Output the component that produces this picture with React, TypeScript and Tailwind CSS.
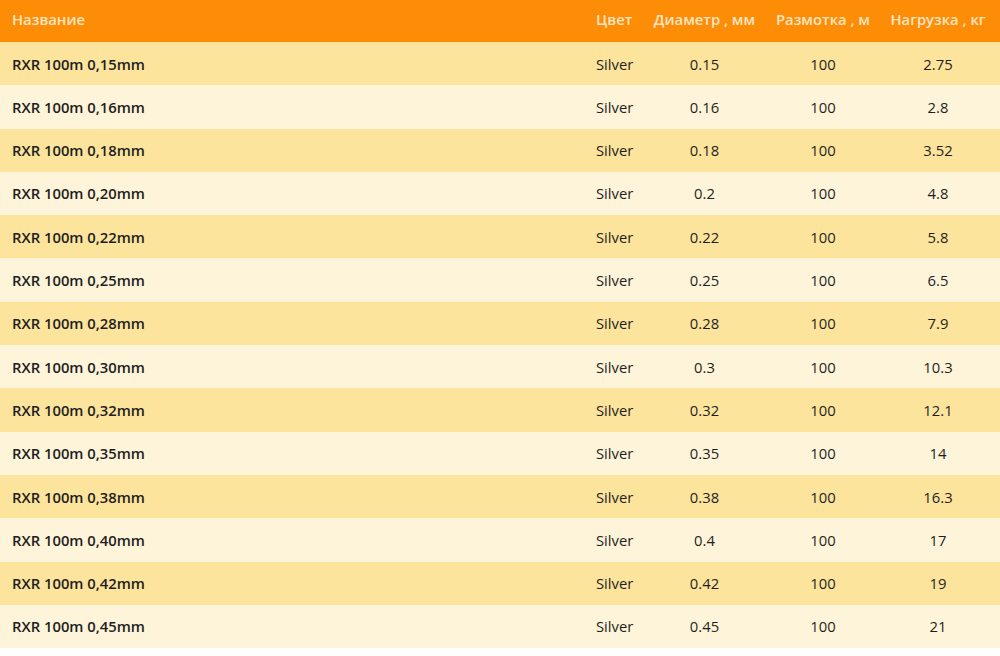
const rows = [
  ['0,15', '0.15', '2.75'],
  ['0,16', '0.16', '2.8'],
  ['0,18', '0.18', '3.52'],
  ['0,20', '0.2', '4.8'],
  ['0,22', '0.22', '5.8'],
  ['0,25', '0.25', '6.5'],
  ['0,28', '0.28', '7.9'],
  ['0,30', '0.3', '10.3'],
  ['0,32', '0.32', '12.1'],
  ['0,35', '0.35', '14'],
  ['0,38', '0.38', '16.3'],
  ['0,40', '0.4', '17'],
  ['0,42', '0.42', '19'],
  ['0,45', '0.45', '21'],
];

const cols = 'grid grid-cols-[586px_57px_123px_114px_116px] items-center';

export default function App() {
  return (
    <div className="w-[1000px] h-[656px] bg-white font-['Open_Sans',sans-serif] text-[14.8px] text-[#1e1e1e]">
      {/* Header */}
      <div className={`${cols} h-[42px] pb-[3px] bg-[#fd8c07] text-[14.8px] font-semibold text-[#fde5c2]`}>
        <div className="pl-3">Название</div>
        <div className="pl-[10px] whitespace-nowrap">Цвет</div>
        <div className="text-center whitespace-nowrap">Диаметр , мм</div>
        <div className="text-center whitespace-nowrap">Размотка , м</div>
        <div className="text-center whitespace-nowrap">Нагрузка , кг</div>
      </div>

      {/* Rows */}
      {rows.map(([name, dia, load], i) => (
        <div
          key={name}
          className={`${cols} h-[43.3px] ${i % 2 === 0 ? 'bg-[#fde49c]' : 'bg-[#fef4d9]'}`}
        >
          <div className="pl-3 font-semibold">RXR 100m {name}mm</div>
          <div className="pl-[10px]">Silver</div>
          <div className="text-center">{dia}</div>
          <div className="text-center">100</div>
          <div className="text-center">{load}</div>
        </div>
      ))}
    </div>
  );
}
